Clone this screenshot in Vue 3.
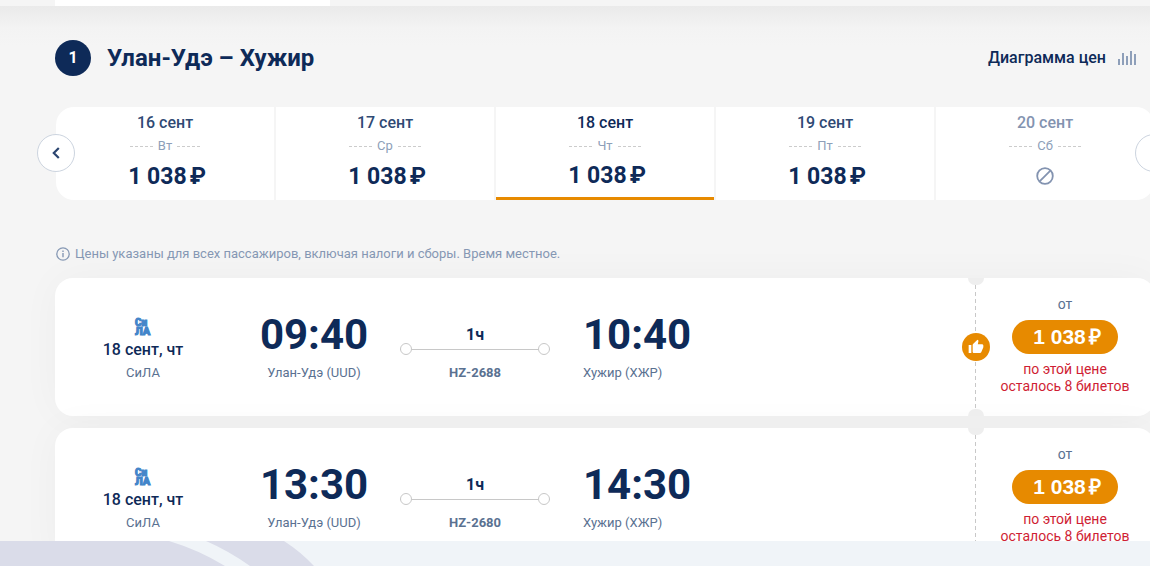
<script setup>
import { ref } from 'vue'

const days = [
  { date: '16 сент', week: 'Вт', price: '1 038' },
  { date: '17 сент', week: 'Ср', price: '1 038' },
  { date: '18 сент', week: 'Чт', price: '1 038' },
  { date: '19 сент', week: 'Пт', price: '1 038' },
  { date: '20 сент', week: 'Сб', price: null }
]
const active = ref(2)

const flights = [
  { dep: '09:40', arr: '10:40', number: 'HZ-2688', best: true },
  { dep: '13:30', arr: '14:30', number: 'HZ-2680', best: false }
]
</script>

<template>
  <div class="page">
    <main class="content">
      <div class="topbar"><div class="topbar-tab"></div></div>
      <div class="inner">
        <header class="head">
          <span class="step">1</span>
          <h1>Улан-Удэ – Хужир</h1>
          <a href="#" class="chart-link">
            Диаграмма цен
            <svg width="18" height="14" viewBox="0 0 18 14" fill="#8e9fb9" aria-hidden="true">
              <path d="M0 8h2v6H0zM4 2h2v12H4zM8 5h2v9H8zM12 0h2v14h-2zM16 3h2v11h-2z" />
            </svg>
          </a>
        </header>

        <section class="days">
          <div class="days-list">
            <button
              v-for="(d, i) in days"
              :key="d.date"
              type="button"
              class="day"
              :class="{ active: i === active, empty: !d.price }"
              :disabled="!d.price"
              @click="active = i"
            >
              <span class="day-date">{{ d.date }}</span>
              <span class="day-week">{{ d.week }}</span>
              <span v-if="d.price" class="day-price">{{ d.price }}<span class="rub">₽</span></span>
              <svg v-else class="none" width="18" height="18" viewBox="0 0 18 18" fill="none" stroke="#8393b0" stroke-width="1.8" aria-hidden="true">
                <circle cx="9" cy="9" r="7.8" />
                <path d="M3.6 14.4 14.4 3.6" />
              </svg>
            </button>
          </div>
          <button type="button" class="nav prev" aria-label="Назад">
            <svg width="8" height="12" viewBox="0 0 8 12" fill="none" stroke="#2b4570" stroke-width="2.2" aria-hidden="true">
              <path d="M6.8 1 1.8 6l5 5" />
            </svg>
          </button>
          <button type="button" class="nav next" aria-label="Вперёд"></button>
        </section>

        <p class="note">
          <svg width="14" height="14" viewBox="0 0 14 14" fill="none" stroke="#8698b4" aria-hidden="true">
            <circle cx="7" cy="7" r="6.2" stroke-width="1.3" />
            <path d="M7 6v4.2M7 3.5V5" stroke-width="1.4" />
          </svg>
          Цены указаны для всех пассажиров, включая налоги и сборы. Время местное.
        </p>

        <section class="flights">
          <article v-for="f in flights" :key="f.number" class="card">
            <div class="col carrier">
              <span class="logo"><span>Си</span><span class="logo-big">ЛА</span></span>
              <span class="strong">18 сент, чт</span>
              <span class="sub">СиЛА</span>
            </div>
            <div class="col">
              <span class="time">{{ f.dep }}</span>
              <span class="sub">Улан-Удэ (UUD)</span>
            </div>
            <div class="col route">
              <span class="duration">1ч</span>
              <span class="line"></span>
              <span class="sub number">{{ f.number }}</span>
            </div>
            <div class="col arrival">
              <span class="time">{{ f.arr }}</span>
              <span class="sub">Хужир (ХЖР)</span>
            </div>
            <div class="col offer">
              <span v-if="f.best" class="best">
                <svg width="16" height="16" viewBox="0 0 24 24" fill="#fff" aria-hidden="true">
                  <path d="M1 21h4V9H1v12zm22-11c0-1.1-.9-2-2-2h-6.31l.95-4.57.03-.32c0-.41-.17-.79-.44-1.06L14.17 1 7.59 7.59C7.22 7.95 7 8.45 7 9v10c0 1.1.9 2 2 2h9c.83 0 1.54-.5 1.84-1.22l3.02-7.05c.09-.23.14-.47.14-.73v-2z" />
                </svg>
              </span>
              <span class="from">от</span>
              <button type="button" class="buy">1 038<span class="rub">₽</span></button>
              <span class="left">по этой цене<br />осталось 8 билетов</span>
            </div>
          </article>
        </section>
      </div>
    </main>
    <footer class="footer">
      <svg width="320" height="25" viewBox="0 0 320 25" aria-hidden="true">
        <path d="M0 0H169Q199 9 225 25H0zM206 0H284Q301 11 314 25H250Q229 10 206 0z" fill="#dadce9" />
      </svg>
    </footer>
  </div>
</template>

<style>
body {
  margin: 0;
}
</style>

<style scoped>
.page {
  display: flex;
  flex-direction: column;
  height: 100vh;
  overflow: hidden;
  background: #f5f5f5;
  color: #0e2a58;
  font-family: Roboto, "Liberation Sans", sans-serif;
}
.page * {
  box-sizing: border-box;
}
button {
  margin: 0;
  padding: 0;
  border: 0;
  color: inherit;
  font-family: inherit;
  cursor: pointer;
}
.content {
  flex: 1;
  min-height: 0;
  overflow: hidden;
}
.topbar {
  height: 6px;
  padding-left: 55px;
}
.topbar-tab {
  width: 275px;
  height: 6px;
  background: #fff;
}
.inner {
  padding: 34px 0 0 55px;
  background: linear-gradient(#eaeaea, #f3f3f3 22px, #f5f5f5 40px);
}
.head {
  display: flex;
  align-items: center;
  height: 36px;
  padding-right: 14px;
}
.step {
  display: grid;
  place-items: center;
  width: 36px;
  height: 36px;
  margin-right: 16px;
  border-radius: 50%;
  background: #0e2a58;
  color: #fff;
  font-size: 16px;
  line-height: 20px;
  font-weight: 700;
}
h1 {
  margin: 0;
  font-size: 24px;
  line-height: 28px;
  font-weight: 700;
}
.chart-link {
  display: flex;
  align-items: center;
  gap: 12px;
  margin-left: auto;
  color: inherit;
  font-size: 16px;
  line-height: 20px;
  font-weight: 500;
  text-decoration: none;
}
.days {
  position: relative;
  margin: 31px -4px 0 1px;
}
.days-list {
  display: grid;
  grid-template-columns: repeat(5, 1fr);
  gap: 2px;
  height: 93px;
  overflow: hidden;
  border-radius: 18px;
}
.day {
  display: flex;
  flex-direction: column;
  align-items: center;
  padding-top: 6px;
  background: #fff;
}
.day.active {
  border-bottom: 3px solid #e78a00;
}
.day-date {
  font-size: 16px;
  line-height: 20px;
  color: #2f4a74;
  font-weight: 500;
}
.active .day-date {
  color: #0e2a58;
}
.empty .day-date {
  color: #8393b0;
}
.day-week {
  display: flex;
  align-items: center;
  gap: 5px;
  margin-top: 5px;
  font-size: 13px;
  line-height: 16px;
  color: #8e9fb9;
}
.day-week::before,
.day-week::after {
  content: "";
  width: 23px;
  height: 1px;
  background: repeating-linear-gradient(90deg, #ccc 0 3px, transparent 3px 5px);
}
.day-price {
  margin-top: 9px;
  padding-left: 4px;
  font-size: 23px;
  line-height: 28px;
  font-weight: 700;
}
.active .day-price {
  margin-top: 8px;
}
.rub {
  margin-left: 3px;
}
.none {
  margin-top: 13px;
}
.nav {
  position: absolute;
  top: 27px;
  display: grid;
  place-items: center;
  width: 38px;
  height: 38px;
  border: 1px solid #ccd4df;
  border-radius: 50%;
  background: #fff;
}
.prev {
  left: -19px;
}
.next {
  right: -19px;
}
.note {
  display: flex;
  align-items: center;
  gap: 5px;
  margin: 46px 0 0 1px;
  font-size: 13px;
  line-height: 16px;
  color: #8698b4;
}
.flights {
  display: grid;
  gap: 12px;
  margin: 16px -5px 0 0;
}
.card {
  display: grid;
  grid-template-columns: 176px 166px 156px 1fr 180px;
  height: 138px;
  border-radius: 18px;
  background: #fff;
  box-shadow: 0 0 40px rgba(0, 0, 0, 0.035);
}
.col {
  display: flex;
  flex-direction: column;
  align-items: center;
}
.logo {
  display: flex;
  flex-direction: column;
  width: 16px;
  margin-top: 41px;
  color: #4385c9;
  font-size: 10px;
  line-height: 8px;
  font-weight: 900;
  -webkit-text-stroke: 1px #4385c9;
}
.logo-big {
  font-size: 11px;
  line-height: 9px;
}
.strong {
  margin-top: 4px;
  font-size: 16px;
  line-height: 20px;
  font-weight: 500;
}
.sub {
  font-size: 13px;
  line-height: 16px;
  color: #5a7191;
}
.carrier .sub {
  margin-top: 5px;
}
.time {
  margin: 33px 0 6px;
  font-size: 42px;
  line-height: 48px;
  font-weight: 700;
}
.arrival {
  align-items: flex-start;
  padding-left: 30px;
}
.duration {
  margin-top: 47px;
  font-size: 16px;
  line-height: 20px;
  font-weight: 700;
}
.line {
  display: flex;
  align-items: center;
  justify-content: space-between;
  width: 150px;
  height: 10px;
  margin: -1px 0 11px;
  background: linear-gradient(#c8c8c8, #c8c8c8) center / 100% 1px no-repeat;
}
.line::before,
.line::after {
  content: "";
  width: 10px;
  height: 10px;
  border: 1px solid #c8c8c8;
  border-radius: 50%;
  background: #fff;
}
.number {
  font-weight: 700;
}
.offer {
  position: relative;
  background: repeating-linear-gradient(#c8c8c8 0 4px, transparent 4px 7px) left / 1px 100% no-repeat;
}
.offer::before,
.offer::after {
  content: "";
  position: absolute;
  left: -7px;
  width: 16px;
  height: 7px;
  background: #eee;
}
.offer::before {
  top: 0;
  border-radius: 0 0 8px 8px;
}
.offer::after {
  bottom: 0;
  border-radius: 8px 8px 0 0;
}
.best {
  position: absolute;
  top: 55px;
  left: -13px;
  display: grid;
  place-items: center;
  width: 28px;
  height: 28px;
  border-radius: 50%;
  background: #e78a00;
}
.from {
  margin-top: 18px;
  font-size: 14px;
  line-height: 16px;
  color: #5a7191;
}
.buy {
  width: 106px;
  height: 34px;
  margin-top: 8px;
  padding: 0 0 2px 4px;
  border-radius: 17px;
  background: #e78a00;
  color: #fff;
  font-family: "Liberation Sans", Arial, sans-serif;
  font-size: 21px;
  font-weight: 700;
}
.left {
  margin-top: 7px;
  font-size: 14px;
  line-height: 17px;
  text-align: center;
  color: #cf1e34;
}
.footer {
  flex: none;
  height: 25px;
  background: #f0f4f8;
}
.footer svg {
  display: block;
}
</style>
